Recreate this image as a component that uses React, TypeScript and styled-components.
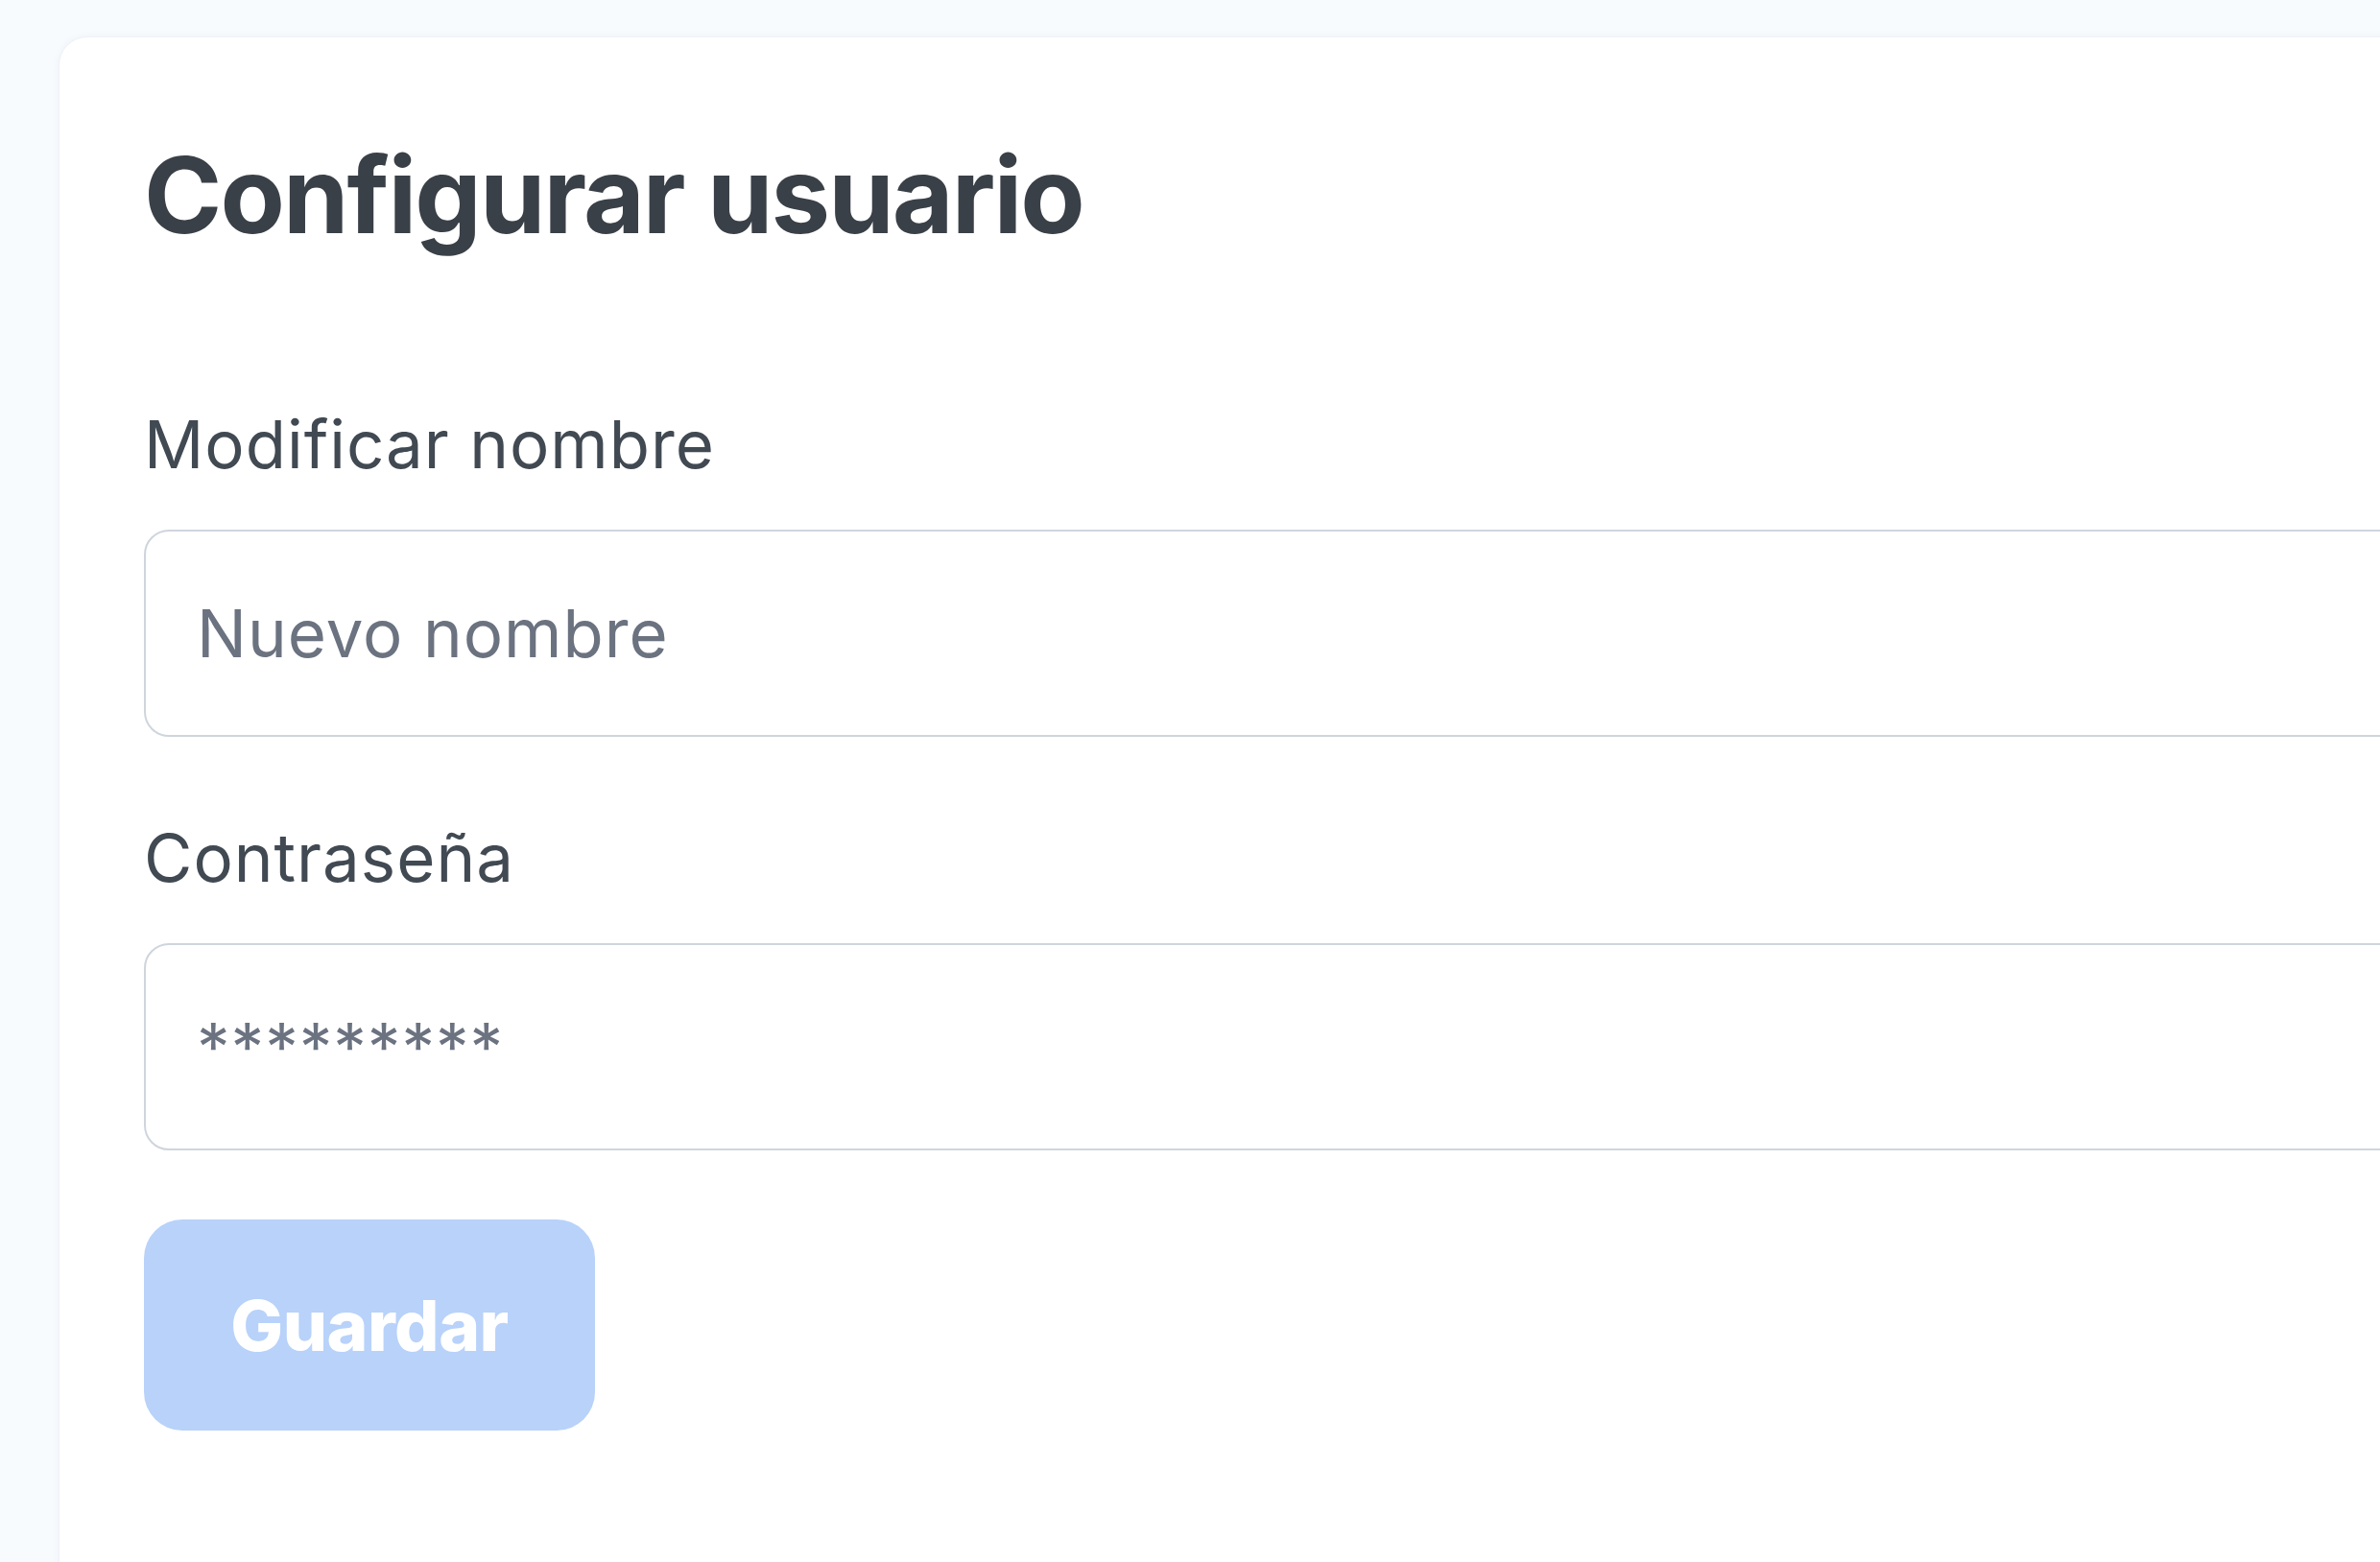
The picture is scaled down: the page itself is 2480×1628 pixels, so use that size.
import React from "react";
import styled, { createGlobalStyle } from "styled-components";

const GlobalStyle = createGlobalStyle`
  html, body {
    margin: 0;
    padding: 0;
    background: #f7fbfe;
    overflow: hidden;
    font-family: Inter, "Noto Sans", sans-serif;
  }
  * { box-sizing: border-box; }
`;

const Page = styled.div`
  padding: 38px 0 0 61px;
  min-height: 1628px;
`;

const Card = styled.section`
  width: 2600px;
  height: 1700px;
  background: #ffffff;
  border: 1px solid #eef2f6;
  border-radius: 30px;
  box-shadow: 0 0 8px rgba(30, 60, 90, 0.04);
  padding: 97px 0 0 88px;
  display: flex;
  flex-direction: column;
`;

const Title = styled.h1`
  margin: 0;
  font-family: Inter, sans-serif;
  font-weight: 700;
  font-size: 110px;
  line-height: 134px;
  color: #3a4047;
  letter-spacing: -1.9px;
`;

const Form = styled.form`
  margin-top: 151px;
  display: flex;
  flex-direction: column;
  gap: 84px;
  width: 100%;
`;

const Field = styled.div`
  display: flex;
  flex-direction: column;
  gap: 47px;
`;

const Label = styled.label`
  font-family: Inter, sans-serif;
  font-weight: 400;
  font-size: 69px;
  line-height: 84px;
  color: #414952;
  letter-spacing: 1px;
`;

const Input = styled.input`
  width: 100%;
  height: 216px;
  border: 2px solid #cfd5dd;
  border-radius: 26px;
  background: #ffffff;
  padding: 0 0 0 53px;
  font-family: Inter, sans-serif;
  font-size: 69px;
  letter-spacing: 1px;
  color: #3a4047;
  outline: none;
  &::placeholder {
    color: #6b7280;
  }
`;

const SaveButton = styled.button`
  margin-top: -12px;
  width: 470px;
  height: 220px;
  border: none;
  border-radius: 40px;
  background: #b8d2fa;
  color: #ffffff;
  font-family: Inter, sans-serif;
  font-weight: 800;
  font-size: 73px;
  letter-spacing: -0.5px;
  display: flex;
  align-items: center;
  justify-content: center;
  cursor: not-allowed;
`;

export default function App() {
  return (
    <>
      <GlobalStyle />
      <Page>
        <Card>
          <Title>Configurar usuario</Title>
          <Form onSubmit={(e) => e.preventDefault()}>
            <Field>
              <Label htmlFor="nombre">Modificar nombre</Label>
              <Input id="nombre" type="text" placeholder="Nuevo nombre" />
            </Field>
            <Field>
              <Label htmlFor="pass">Contraseña</Label>
              <Input id="pass" type="password" placeholder="*********" />
            </Field>
            <SaveButton type="submit" disabled>
              Guardar
            </SaveButton>
          </Form>
        </Card>
      </Page>
    </>
  );
}
